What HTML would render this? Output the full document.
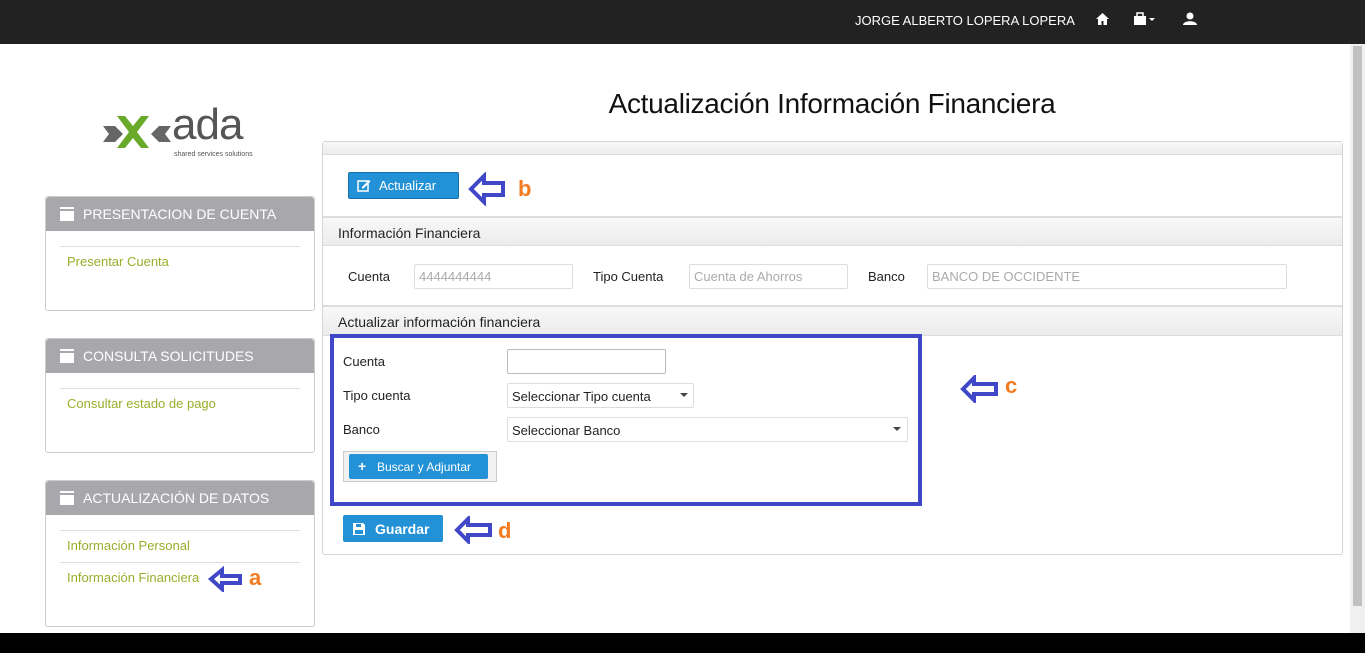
<!DOCTYPE html><html><head><meta charset="utf-8"><style>
*{box-sizing:border-box}body{margin:0;width:1365px;height:653px;overflow:hidden;background:#fff;font-family:"Liberation Sans",sans-serif;position:relative;color:#222}
.abs{position:absolute}
.top{left:0;top:0;width:1365px;height:44px;background:#222}
.panel{border:1px solid #ccc;border-radius:3px;background:#fff}
.ph{background:#a8a8ac;color:#fff;font-size:14px;height:34px;line-height:34px;padding-left:37px;position:relative;border-radius:3px 3px 0 0}
.ph:before{content:"";position:absolute;left:14px;top:12px;width:14px;height:10px;background:#fff;border-top:2px solid #a8a8ac;box-shadow:0 -2px 0 #fff}
.link{color:#9aae2a;font-size:13px}
.hr{border-top:1px solid #ddd}
.sec{background:linear-gradient(#f8f8f8,#ececec);border-bottom:1px solid #ddd;font-size:14px;color:#222}
.btn{background:#2391d6;border:1px solid #1a70a8;border-radius:2px;color:#fff;font-size:13px}
.inp{border:1px solid #ddd;border-radius:2px;background:#fff;font-size:13px;color:#aaa;padding-left:4px;line-height:22px}
.lab{font-size:13px;color:#222}
.ann{color:#f47b20;font-weight:bold;font-size:22px}
</style></head><body>
<div class="abs top"></div>
<span class="abs" style="left:855px;top:13px;color:#fff;font-size:13px">JORGE ALBERTO LOPERA LOPERA</span>
<svg class="abs" style="left:1095px;top:12px" width="15" height="14"><path d="M7.5 1L1 7h2v6h3.5V9h2v4H12V7h2z" fill="#fff"/></svg>
<svg class="abs" style="left:1134px;top:12px" width="24" height="14"><rect x="0" y="4" width="12" height="9" fill="#fff"/><rect x="3" y="1" width="6" height="4" fill="none" stroke="#fff" stroke-width="1.5"/><path d="M15 6h6l-3 3z" fill="#fff"/></svg>
<svg class="abs" style="left:1183px;top:12px" width="14" height="14"><circle cx="7" cy="4" r="3.5" fill="#fff"/><path d="M0 13c0-5 14-5 14 0z" fill="#fff"/></svg>

<div class="abs" style="left:1350px;top:44px;width:15px;height:589px;background:#f0f0f0"></div>
<div class="abs" style="left:1353px;top:46px;width:9px;height:560px;background:#c1c1c1"></div>
<div class="abs" style="left:0;top:633px;width:1365px;height:20px;background:#000"></div>

<!-- logo -->
<svg class="abs" style="left:103px;top:112px" width="70" height="42"><path d="M0 14h12l8 8-8 8H0l6-8z" fill="#666"/><path d="M14 4h8l8 10 8-10h8L34 20l12 16h-8L30 26l-8 10h-8l12-16z" fill="#6aaa2a"/><path d="M68 14H56l-8 8 8 8h12l-6-8z" fill="#666"/></svg>
<span class="abs" style="left:172px;top:100px;font-size:44px;color:#555;letter-spacing:-1px">ada</span>
<span class="abs" style="left:174px;top:151px;font-size:7px;color:#555">shared services solutions</span>

<div class="abs panel" style="left:45px;top:196px;width:270px;height:115px"><div class="ph">PRESENTACION DE CUENTA</div></div>
<div class="abs hr" style="left:60px;top:246px;width:240px"></div>
<span class="abs link" style="left:67px;top:254px">Presentar Cuenta</span>

<div class="abs panel" style="left:45px;top:338px;width:270px;height:115px"><div class="ph">CONSULTA SOLICITUDES</div></div>
<div class="abs hr" style="left:60px;top:388px;width:240px"></div>
<span class="abs link" style="left:67px;top:396px">Consultar estado de pago</span>

<div class="abs panel" style="left:45px;top:480px;width:270px;height:147px"><div class="ph">ACTUALIZACIÓN DE DATOS</div></div>
<div class="abs hr" style="left:60px;top:530px;width:240px"></div>
<span class="abs link" style="left:67px;top:538px">Información Personal</span>
<div class="abs hr" style="left:60px;top:562px;width:240px"></div>
<span class="abs link" style="left:67px;top:570px">Información Financiera</span>

<div class="abs" style="left:322px;top:88px;width:1020px;text-align:center;font-size:28px;color:#111;letter-spacing:-0.3px">Actualización Información Financiera</div>

<div class="abs panel" style="left:322px;top:141px;width:1021px;height:414px;border-color:#d5d5d5"></div>
<div class="abs sec" style="left:323px;top:142px;width:1019px;height:13px"></div>
<div class="abs btn" style="left:348px;top:172px;width:111px;height:27px;line-height:25px;padding-left:30px">Actualizar</div>
<svg class="abs" style="left:357px;top:179px" width="14" height="13"><rect x="1" y="2" width="10" height="10" fill="none" stroke="#fff" stroke-width="1.5"/><path d="M5 8l7-7 1.5 1.5-7 7H5z" fill="#fff"/></svg>
<div class="abs" style="left:323px;top:216px;width:1019px;border-top:2px solid #ddd"></div>
<div class="abs sec" style="left:323px;top:218px;width:1019px;height:28px;line-height:30px;padding-left:15px">Información Financiera</div>
<span class="abs lab" style="left:348px;top:269px">Cuenta</span>
<div class="abs inp" style="left:414px;top:264px;width:159px;height:25px;line-height:24px">4444444444</div>
<span class="abs lab" style="left:593px;top:269px">Tipo Cuenta</span>
<div class="abs inp" style="left:689px;top:264px;width:159px;height:25px;line-height:24px">Cuenta de Ahorros</div>
<span class="abs lab" style="left:868px;top:269px">Banco</span>
<div class="abs inp" style="left:927px;top:264px;width:360px;height:25px;line-height:24px">BANCO DE OCCIDENTE</div>
<div class="abs" style="left:323px;top:305px;width:1019px;border-top:2px solid #ddd"></div>
<div class="abs sec" style="left:323px;top:307px;width:1019px;height:29px;line-height:31px;padding-left:15px">Actualizar información financiera</div>

<div class="abs" style="left:330px;top:334px;width:592px;height:172px;border:4px solid #4048c8"></div>
<span class="abs lab" style="left:343px;top:354px">Cuenta</span>
<div class="abs inp" style="left:507px;top:349px;width:159px;height:25px;border-color:#bbb"></div>
<span class="abs lab" style="left:343px;top:388px">Tipo cuenta</span>
<div class="abs inp" style="left:507px;top:383px;width:187px;height:25px;color:#222;line-height:25px">Seleccionar Tipo cuenta</div>
<svg class="abs" style="left:680px;top:393px" width="8" height="5"><path d="M0 0h8L4 4z" fill="#444"/></svg>
<span class="abs lab" style="left:343px;top:422px">Banco</span>
<div class="abs inp" style="left:507px;top:417px;width:401px;height:25px;color:#222;line-height:25px">Seleccionar Banco</div>
<svg class="abs" style="left:893px;top:427px" width="8" height="5"><path d="M0 0h8L4 4z" fill="#444"/></svg>
<div class="abs" style="left:343px;top:451px;width:154px;height:31px;border:1px solid #ccc;background:#f2f2f2"></div>
<div class="abs btn" style="left:349px;top:454px;width:139px;height:25px;line-height:24px;padding-left:27px;border-color:#2391d6;font-size:12px">Buscar y Adjuntar</div>
<span class="abs" style="left:358px;top:458px;color:#fff;font-weight:bold;font-size:14px">+</span>
<div class="abs btn" style="left:343px;top:515px;width:100px;height:27px;line-height:26px;padding-left:31px;border-color:#2391d6;font-size:14px;font-weight:bold">Guardar</div>
<svg class="abs" style="left:353px;top:523px" width="12" height="12"><path d="M0 0h10l2 2v10H0z" fill="#fff"/><rect x="3" y="1" width="5" height="3" fill="#2391d6"/><rect x="2" y="7" width="8" height="4" fill="#2391d6"/></svg>

<!-- arrows -->
<svg class="abs" style="left:208px;top:566px" width="36" height="26"><path d="M3 13L14 4v6h18v7H14v6z" fill="none" stroke="#4048c8" stroke-width="4" stroke-linejoin="miter"/></svg>
<span class="abs ann" style="left:249px;top:565px">a</span>
<svg class="abs" style="left:468px;top:172px" width="40" height="34"><path d="M3 17L16 4v7h19v12H16v7z" fill="none" stroke="#4048c8" stroke-width="4"/></svg>
<span class="abs ann" style="left:518px;top:176px">b</span>
<svg class="abs" style="left:960px;top:375px" width="40" height="28"><path d="M3 14L14 3v6h22v10H14v6z" fill="none" stroke="#4048c8" stroke-width="4"/></svg>
<span class="abs ann" style="left:1005px;top:373px">c</span>
<svg class="abs" style="left:454px;top:516px" width="40" height="28"><path d="M3 14L14 3v6h22v10H14v6z" fill="none" stroke="#4048c8" stroke-width="4"/></svg>
<span class="abs ann" style="left:498px;top:518px">d</span>
</body></html>
